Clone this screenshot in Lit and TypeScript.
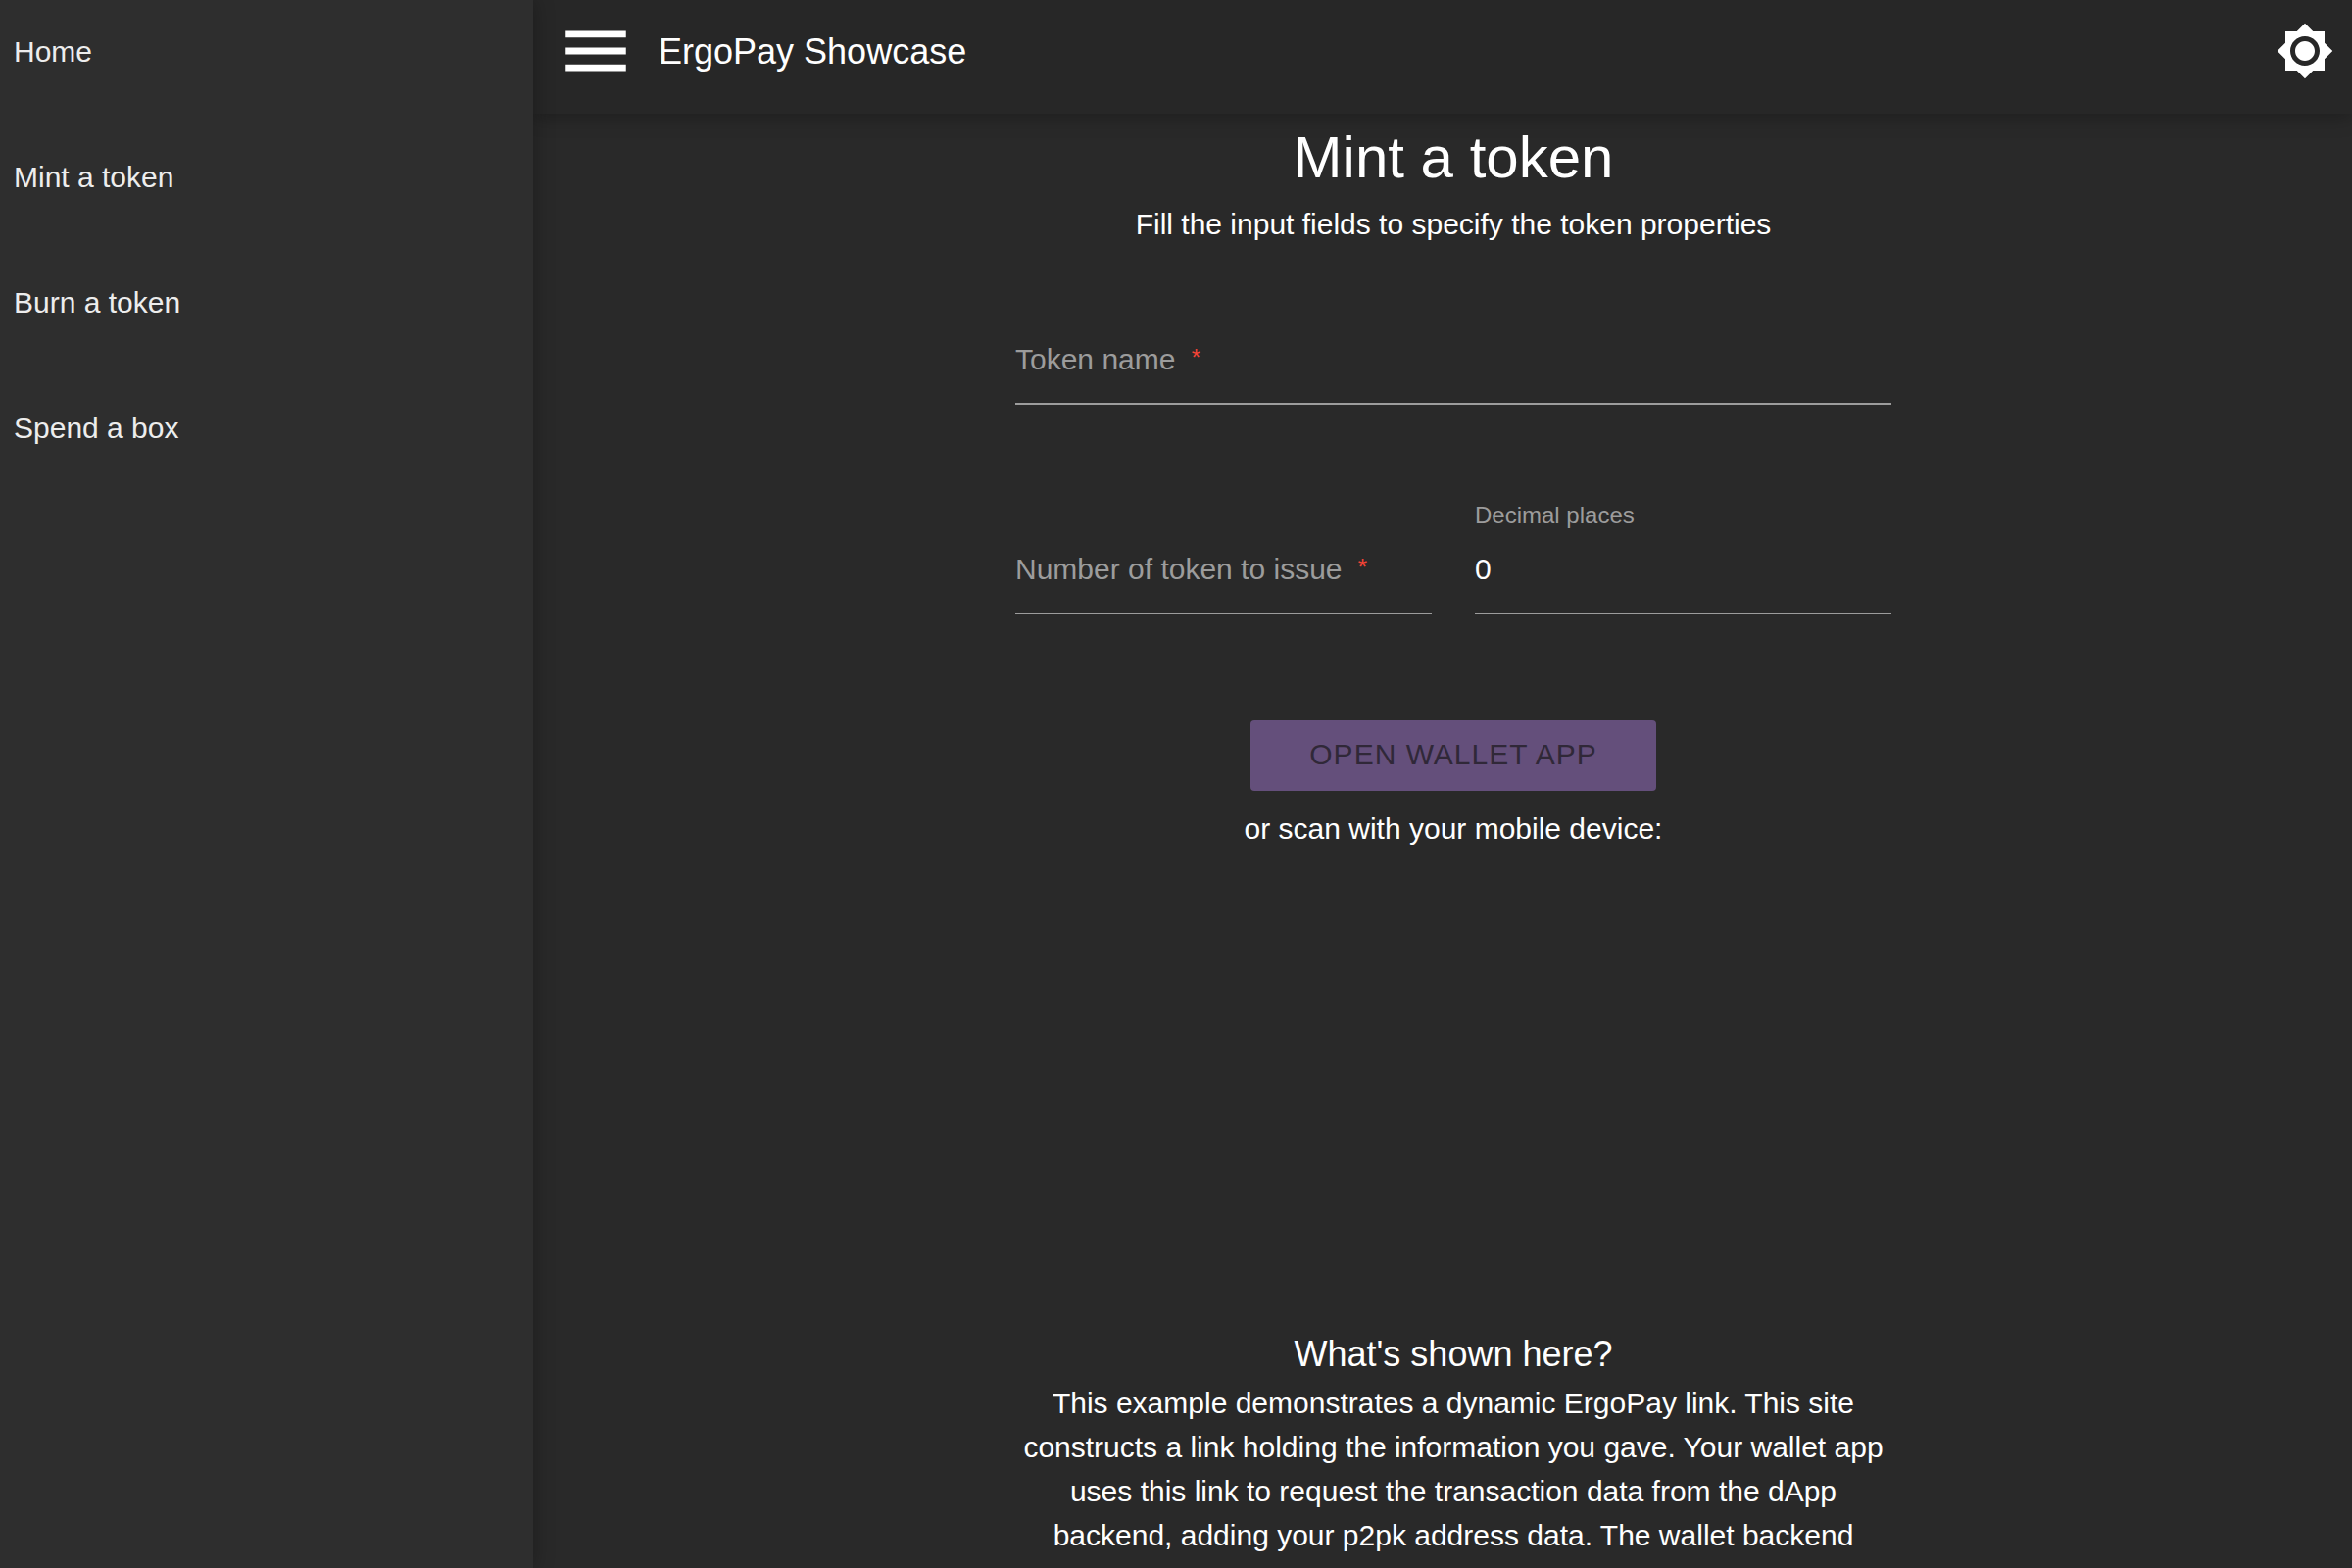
import { LitElement, html, css, nothing } from "lit";
import { customElement, property, state } from "lit/decorators.js";

@customElement("showcase-field")
class ShowcaseField extends LitElement {
  @property() label = "";
  @property() value = "";
  @property({ type: Boolean }) required = false;

  static styles = css`
    :host {
      display: block;
      min-width: 0;
    }
    .field {
      display: grid;
      grid-template-rows: 46px 62px;
      border-bottom: 2px solid #9c9c9c;
    }
    .label {
      grid-column: 1;
      grid-row: 1;
      align-self: start;
      font-size: 24px;
      line-height: 18px;
      color: #9c9c9c;
    }
    .field.empty .label {
      grid-row: 2;
      font-size: 30px;
      line-height: 36px;
      pointer-events: none;
      z-index: 1;
    }
    .mark {
      margin-left: 8px;
      font-size: 24px;
      line-height: 0;
      vertical-align: 4px;
      color: #f44336;
    }
    .input {
      grid-column: 1;
      grid-row: 2;
      box-sizing: border-box;
      width: 100%;
      height: 62px;
      margin: 0;
      padding: 0 0 26px;
      border: 0;
      outline: 0;
      background: transparent;
      color: #fff;
      font: inherit;
      font-size: 30px;
      line-height: 36px;
    }
  `;

  private onInput(event: Event) {
    this.value = (event.target as HTMLInputElement).value;
  }

  render() {
    return html`
      <div class="field ${this.value === "" ? "empty" : ""}">
        <label class="label" for="input"
          >${this.label}${this.required
            ? html` <span class="mark" aria-hidden="true">*</span>`
            : nothing}</label
        >
        <input
          class="input"
          id="input"
          type="text"
          .value=${this.value}
          ?required=${this.required}
          @input=${this.onInput}
        />
      </div>
    `;
  }
}

@customElement("app-root")
class AppRoot extends LitElement {
  @state() private drawerOpen = true;

  static styles = css`
    :host {
      display: block;
      font-family: "Liberation Sans", Helvetica, Arial, sans-serif;
      font-size: 30px;
      line-height: 45px;
      color: #fff;
    }
    .shell {
      display: flex;
      height: 100vh;
      background: #292929;
      overflow: hidden;
    }
    .drawer {
      flex: none;
      width: 544px;
      background: #2e2e2e;
      box-shadow: 0 0 20px rgba(0, 0, 0, 0.3);
      z-index: 2;
    }
    .links {
      display: flex;
      flex-direction: column;
      gap: 24px;
      margin: 0;
      padding: 0;
      list-style: none;
    }
    .link {
      display: flex;
      align-items: center;
      height: 104px;
      padding: 0 14px;
      color: #ededed;
      text-decoration: none;
    }
    .page {
      flex: 1;
      min-width: 0;
      display: flex;
      flex-direction: column;
    }
    .bar {
      flex: none;
      display: flex;
      align-items: center;
      box-sizing: border-box;
      height: 116px;
      padding: 0 18px 12px 23px;
      background: #272727;
      box-shadow: 0 2px 20px rgba(0, 0, 0, 0.3);
      z-index: 1;
    }
    .icon-button {
      display: flex;
      margin: 0;
      padding: 0;
      border: 0;
      background: none;
      color: #fff;
      cursor: pointer;
    }
    .menu-icon {
      width: 82px;
      height: 82px;
    }
    .theme-icon {
      width: 60px;
      height: 60px;
    }
    .brand {
      flex: 1;
      margin-left: 23px;
      font-size: 36px;
    }
    .content {
      flex: 1;
      min-height: 0;
      overflow: hidden;
      padding: 9px 0 0 22px;
    }
    .column {
      max-width: 894px;
      margin: 0 auto;
      text-align: center;
    }
    .title {
      margin: 0;
      font-size: 60px;
      line-height: 72px;
      font-weight: 400;
    }
    .text {
      margin: 0;
    }
    .lead {
      margin-top: 9px;
    }
    .form {
      display: grid;
      grid-template-columns: 1fr 1fr;
      gap: 104px 44px;
      margin-top: 52px;
      text-align: left;
    }
    .wide {
      grid-column: 1 / -1;
    }
    .open {
      display: block;
      height: 72px;
      margin: 108px auto 16px;
      padding: 0 60px 4px;
      border: 0;
      border-radius: 4px;
      background: #644f7b;
      color: #302838;
      font: inherit;
      letter-spacing: 1px;
      text-transform: uppercase;
    }
    .code {
      height: 487px;
    }
    .subtitle {
      margin: 0;
      font-size: 36px;
      line-height: 54px;
      font-weight: 400;
    }
  `;

  private toggleDrawer() {
    this.drawerOpen = !this.drawerOpen;
  }

  render() {
    const pages = ["Home", "Mint a token", "Burn a token", "Spend a box"];
    return html`
      <div class="shell">
        ${this.drawerOpen
          ? html`<nav class="drawer">
              <ul class="links">
                ${pages.map(
                  (page) => html`<li><a class="link" href="#">${page}</a></li>`
                )}
              </ul>
            </nav>`
          : nothing}
        <div class="page">
          <header class="bar">
            <button class="icon-button" aria-label="Menu" @click=${this.toggleDrawer}>
              <svg class="menu-icon" viewBox="0 0 24 24" fill="currentColor">
                <path d="M3 18h18v-2H3v2zm0-5h18v-2H3v2zm0-7v2h18V6H3z" />
              </svg>
            </button>
            <span class="brand">ErgoPay Showcase</span>
            <button class="icon-button" aria-label="Theme">
              <svg class="theme-icon" viewBox="0 0 24 24" fill="currentColor">
                <path
                  d="M20 8.69V4h-4.69L12 .69 8.69 4H4v4.69L.69 12 4 15.31V20h4.69L12 23.31 15.31 20H20v-4.69L23.31 12 20 8.69zM12 18c-3.31 0-6-2.69-6-6s2.69-6 6-6 6 2.69 6 6-2.69 6-6 6zm0-10c-2.21 0-4 1.79-4 4s1.79 4 4 4 4-1.79 4-4-1.79-4-4-4z"
                />
              </svg>
            </button>
          </header>
          <main class="content">
            <div class="column">
              <h1 class="title">Mint a token</h1>
              <p class="text lead">Fill the input fields to specify the token properties</p>
              <form class="form">
                <showcase-field class="wide" label="Token name" required></showcase-field>
                <showcase-field label="Number of token to issue" required></showcase-field>
                <showcase-field label="Decimal places" value="0"></showcase-field>
              </form>
              <button class="open" disabled>Open wallet app</button>
              <p class="text">or scan with your mobile device:</p>
              <div class="code"></div>
              <h2 class="subtitle">What's shown here?</h2>
              <p class="text">
                This example demonstrates a dynamic ErgoPay link. This site constructs a
                link holding the information you gave. Your wallet app uses this link to
                request the transaction data from the dApp backend, adding your p2pk
                address data. The wallet backend
              </p>
            </div>
          </main>
        </div>
      </div>
    `;
  }
}
